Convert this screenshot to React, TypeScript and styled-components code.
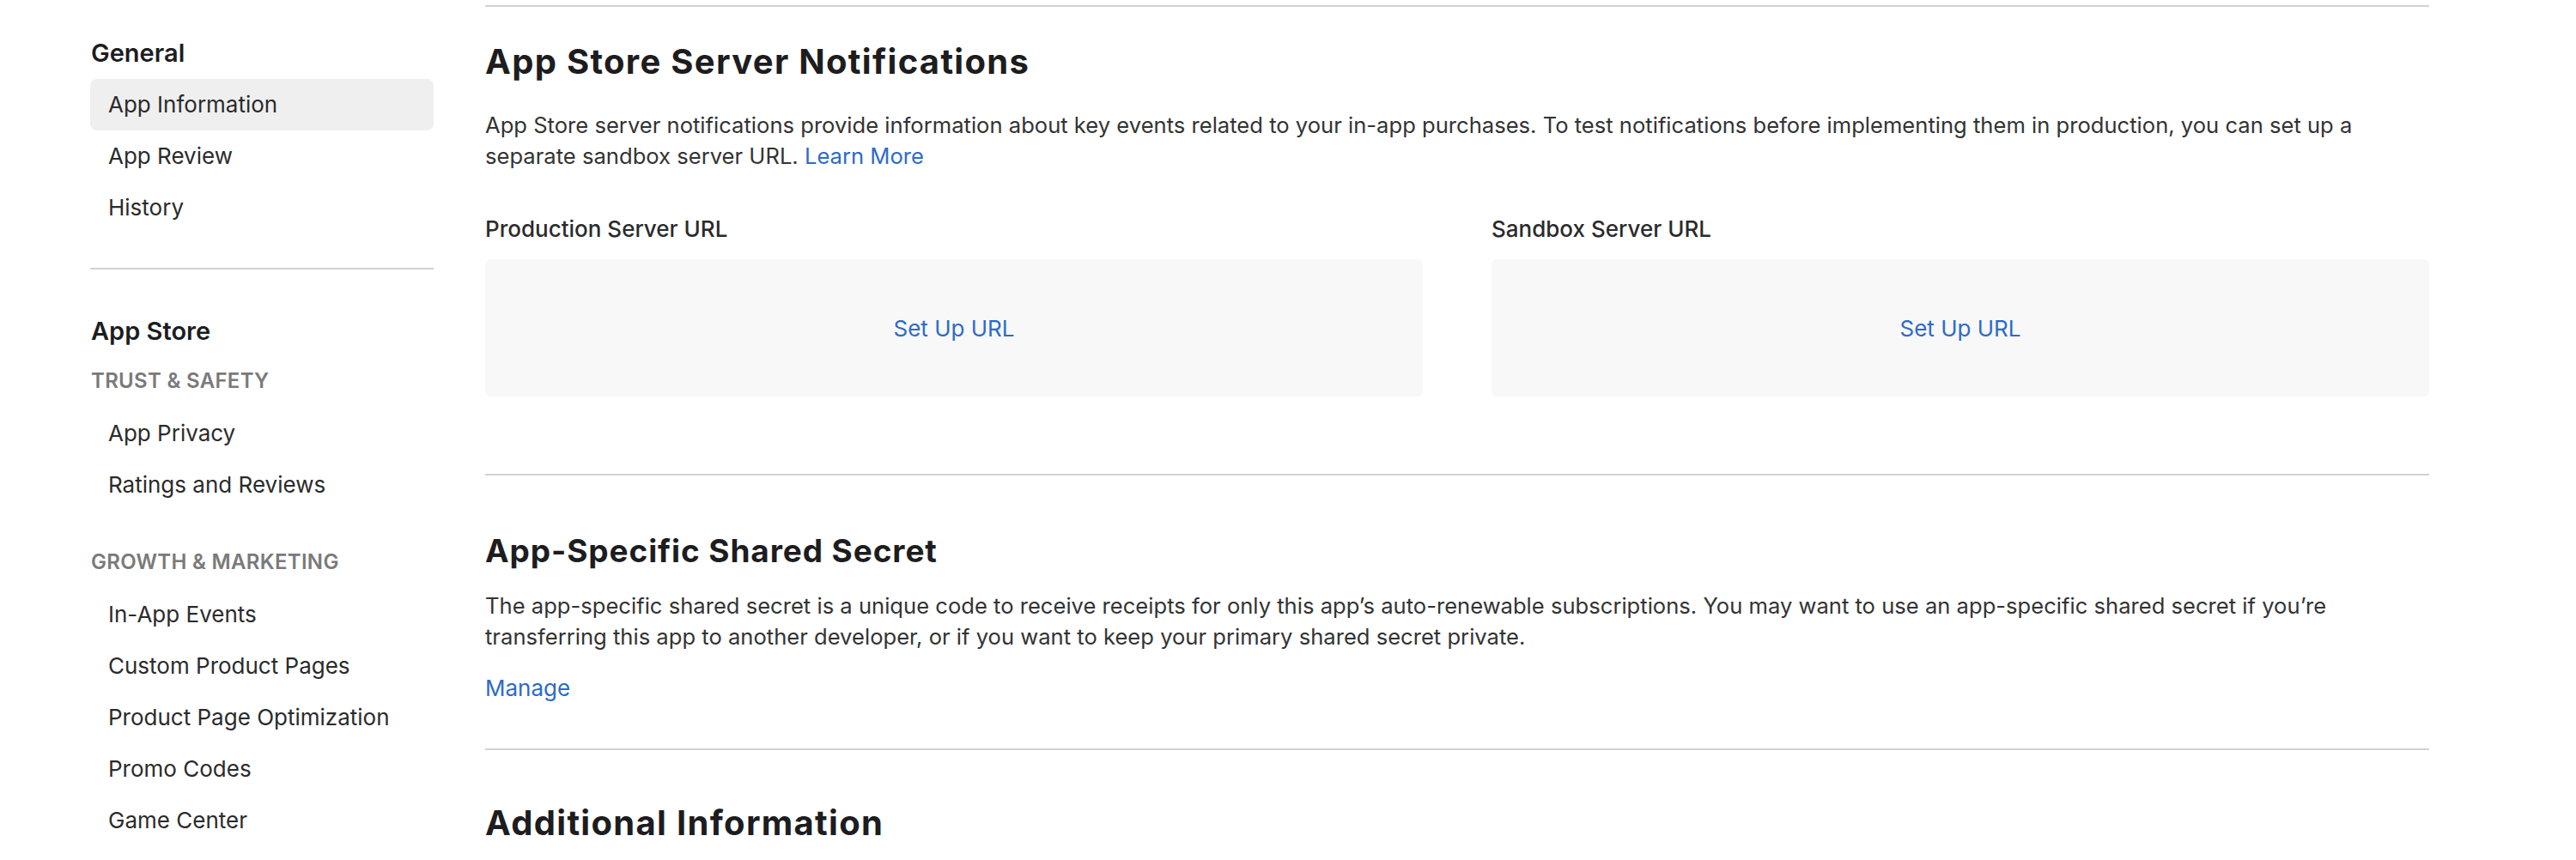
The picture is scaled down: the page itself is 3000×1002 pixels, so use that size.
import styled, { createGlobalStyle } from 'styled-components'

interface NavGroup {
  label?: string
  items: string[]
}

interface NavSection {
  title: string
  groups: NavGroup[]
}

const navSections: NavSection[] = [
  {
    title: 'General',
    groups: [{ items: ['App Information', 'App Review', 'History'] }],
  },
  {
    title: 'App Store',
    groups: [
      { label: 'Trust & Safety', items: ['App Privacy', 'Ratings and Reviews'] },
      {
        label: 'Growth & Marketing',
        items: [
          'In-App Events',
          'Custom Product Pages',
          'Product Page Optimization',
          'Promo Codes',
          'Game Center',
        ],
      },
    ],
  },
]

const GlobalStyle = createGlobalStyle`
  html, body {
    margin: 0;
    background: #fff;
  }

  body {
    font-family: Inter, "Noto Sans", sans-serif;
    color: #1d1d1f;
    -webkit-font-smoothing: antialiased;
  }

  * {
    box-sizing: border-box;
  }
`

const Page = styled.div`
  display: flex;
  gap: 60px;
  height: 1002px;
  overflow: hidden;
  padding-left: 105px;
`

const Sidebar = styled.nav`
  flex: 0 0 400px;
  padding-top: 44px;
`

const SidebarSection = styled.div`
  & + & {
    border-top: 2px solid #d2d2d2;
    margin-top: 40px;
    padding-top: 54px;
  }
`

const SectionTitle = styled.h3`
  font-size: 29px;
  font-weight: 600;
  line-height: 36px;
  margin: 0 0 12px;
  padding-left: 1px;
`

const GroupLabel = styled.h4`
  color: #7a7a7a;
  font-size: 24px;
  font-weight: 600;
  letter-spacing: 0.3px;
  line-height: 30px;
  margin: 25px 0 16px;
  padding-left: 1px;
  text-transform: uppercase;
`

const NavGroupBlock = styled.div`
  & + & ${GroupLabel} {
    margin-top: 45px;
  }
`

const NavList = styled.ul`
  list-style: none;
  margin: 0;
  padding: 0;
`

const NavItem = styled.li<{ $active?: boolean }>`
  background: ${({ $active }) => ($active ? '#efefef' : 'transparent')};
  border-radius: 8px;
  color: #2b2b2b;
  font-size: 26px;
  height: 60px;
  line-height: 60px;
  padding-left: 21px;
`

const Main = styled.main`
  flex: 0 0 2264px;
  padding-top: 6px;
`

const Divider = styled.hr`
  border: none;
  border-top: 2px solid #d2d2d2;
  margin: 0;
`

const Section = styled.section<{ $top: number }>`
  padding-top: ${({ $top }) => $top}px;
`

const Heading = styled.h2<{ $small?: boolean }>`
  color: #1d1d1f;
  font-size: ${({ $small }) => ($small ? 37 : 40)}px;
  font-weight: 700;
  letter-spacing: ${({ $small }) => ($small ? 0.9 : 1.3)}px;
  line-height: ${({ $small }) => ($small ? 44 : 48)}px;
  margin: 0 0 ${({ $small }) => ($small ? 24 : 32)}px;
`

const Text = styled.p`
  color: #333;
  font-size: 25.6px;
  line-height: 36px;
  margin: 0;
`

const Link = styled.a`
  color: #2d6bc8;
  cursor: pointer;
  text-decoration: none;
`

const ManageLink = styled(Link)`
  display: inline-block;
  font-size: 26px;
  line-height: 36px;
  margin: 24px 0 52px;
`

const UrlGrid = styled.div`
  display: grid;
  gap: 80px;
  grid-template-columns: 1fr 1fr;
  margin: 49px 0 90px;
`

const FieldLabel = styled.div`
  color: #2b2b2b;
  font-size: 26px;
  font-weight: 500;
  line-height: 36px;
  margin-bottom: 17px;
`

const UrlBox = styled.div`
  align-items: center;
  background: #f8f8f8;
  border-radius: 6px;
  display: flex;
  font-size: 26px;
  height: 160px;
  justify-content: center;
`

export default function App() {
  return (
    <>
      <GlobalStyle />
      <Page>
        <Sidebar>
          {navSections.map((section) => (
            <SidebarSection key={section.title}>
              <SectionTitle>{section.title}</SectionTitle>
              {section.groups.map((group, i) => (
                <NavGroupBlock key={group.label ?? i}>
                  {group.label && <GroupLabel>{group.label}</GroupLabel>}
                  <NavList>
                    {group.items.map((item) => (
                      <NavItem key={item} $active={item === 'App Information'}>
                        {item}
                      </NavItem>
                    ))}
                  </NavList>
                </NavGroupBlock>
              ))}
            </SidebarSection>
          ))}
        </Sidebar>

        <Main>
          <Divider />
          <Section $top={40}>
            <Heading>App Store Server Notifications</Heading>
            <Text>
              App Store server notifications provide information about key events related to your
              in-app purchases. To test notifications before implementing them in production, you
              can set up a separate sandbox server URL. <Link>Learn More</Link>
            </Text>
            <UrlGrid>
              <div>
                <FieldLabel>Production Server URL</FieldLabel>
                <UrlBox>
                  <Link>Set Up URL</Link>
                </UrlBox>
              </div>
              <div>
                <FieldLabel>Sandbox Server URL</FieldLabel>
                <UrlBox>
                  <Link>Set Up URL</Link>
                </UrlBox>
              </div>
            </UrlGrid>
          </Section>
          <Divider />
          <Section $top={66}>
            <Heading $small>App-Specific Shared Secret</Heading>
            <Text>
              The app-specific shared secret is a unique code to receive receipts for only this
              app’s auto-renewable subscriptions. You may want to use an app-specific shared secret
              if you’re transferring this app to another developer, or if you want to keep your
              primary shared secret private.
            </Text>
            <ManageLink>Manage</ManageLink>
          </Section>
          <Divider />
          <Section $top={61}>
            <Heading>Additional Information</Heading>
          </Section>
        </Main>
      </Page>
    </>
  )
}
